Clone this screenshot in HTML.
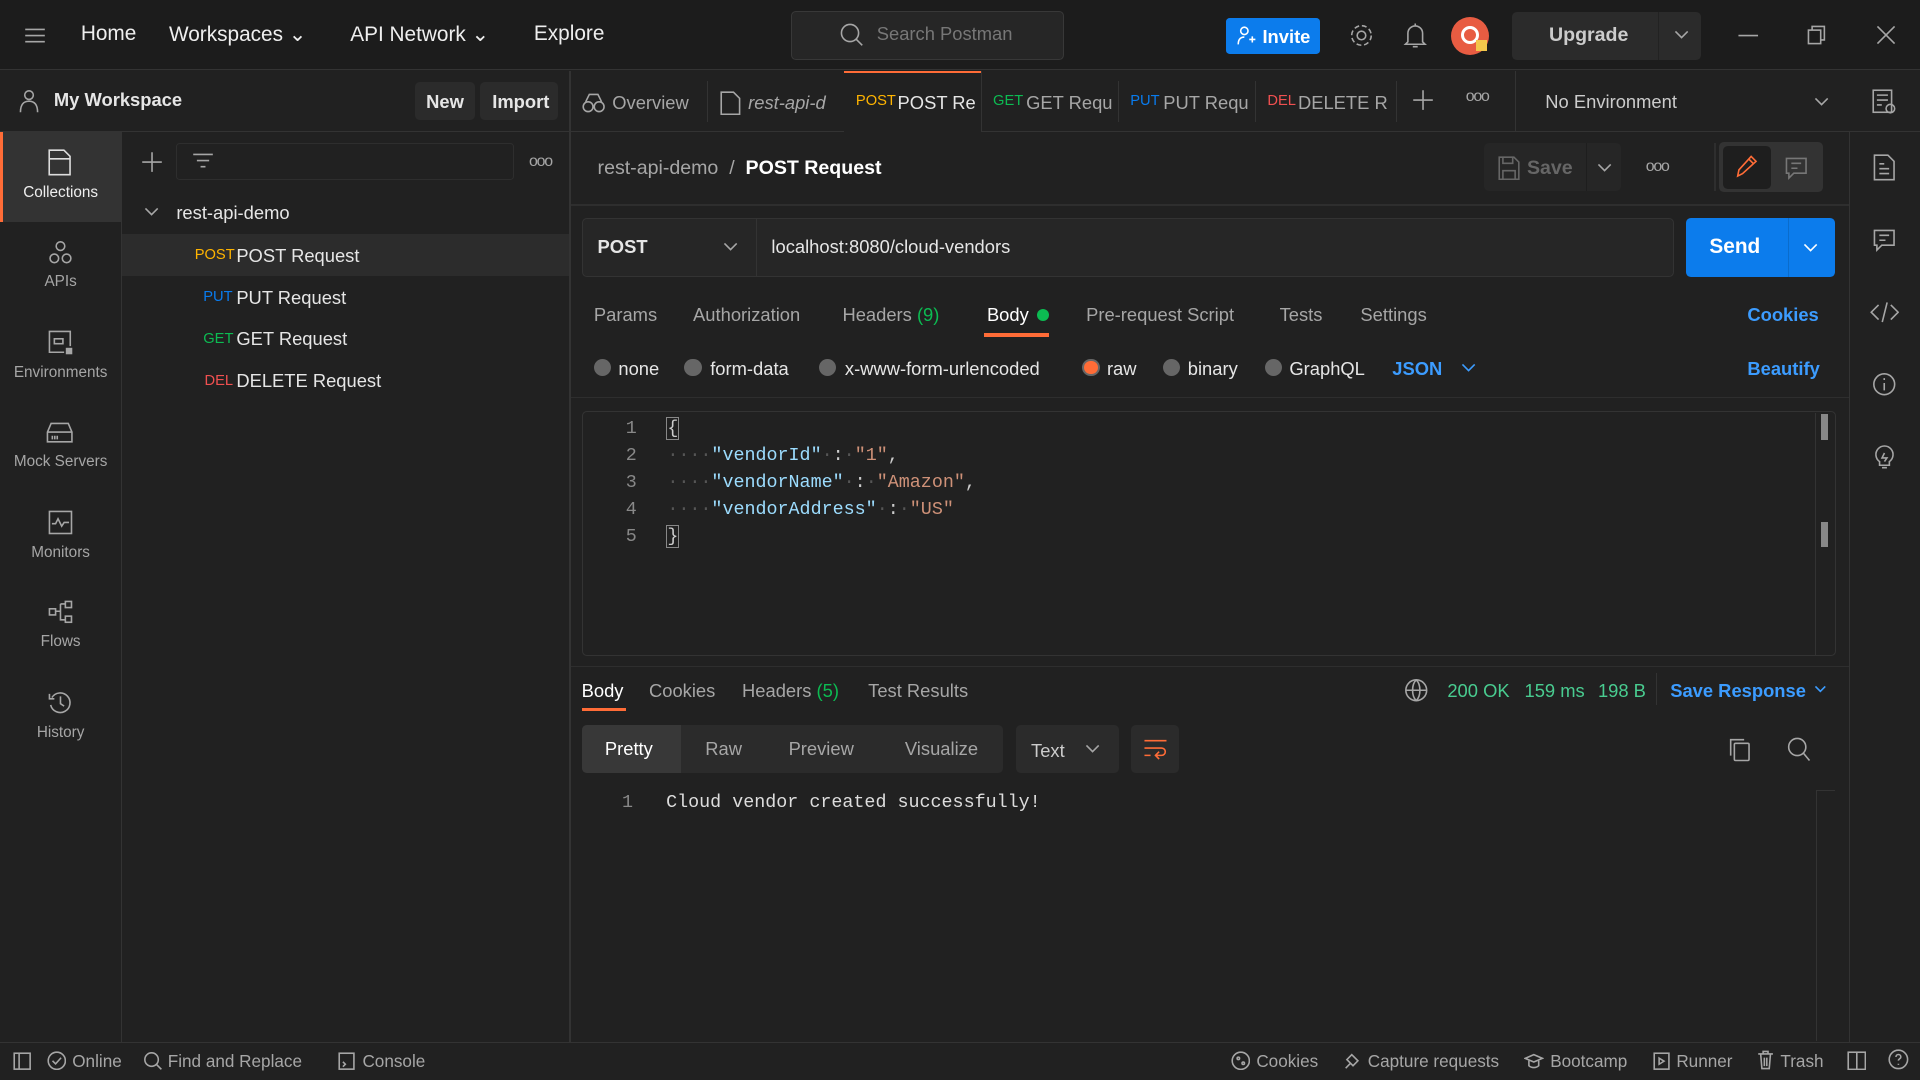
<!DOCTYPE html>
<html><head><meta charset="utf-8">
<style>
html{zoom:1.22449}
*{box-sizing:border-box;margin:0;padding:0}
body{width:1568px;height:882px;background:#212121;color:#e6e6e6;font-family:"Liberation Sans",sans-serif;font-size:14px;position:relative;overflow:hidden}
.a{position:absolute}
.muted{color:#a6a6a6}
svg{position:absolute;fill:none;stroke:#a6a6a6;stroke-width:1.3}
.mono{font-family:"Liberation Mono",monospace}
</style></head><body>
<!-- top bar -->
<div class="a" style="left:0;top:0;width:1568px;height:57px;background:#1c1c1c;border-bottom:1px solid #333"></div>
<svg style="left:20px;top:22px" width="18" height="14"><path d="M1 2h16M1 7h16M1 12h16"/></svg>
<div class="a" style="left:66px;top:18px;font-size:17px;color:#eee">Home</div>
<div class="a" style="left:138px;top:18px;font-size:17px;color:#eee">Workspaces ⌄</div>
<div class="a" style="left:286px;top:18px;font-size:17px;color:#eee">API Network ⌄</div>
<div class="a" style="left:436px;top:18px;font-size:17px;color:#eee">Explore</div>
<div class="a" style="left:646px;top:9px;width:223px;height:40px;background:#262626;border:1px solid #383838;border-radius:4px"></div>
<svg style="left:685px;top:18px" width="22" height="22"><circle cx="9" cy="9" r="7"/><path d="M14 14l5 5"/></svg>
<div class="a" style="left:716px;top:19px;font-size:15px;color:#777">Search Postman</div>
<div class="a" style="left:1001px;top:15px;width:77px;height:29px;background:#0c7cec;border-radius:3px;color:#fff;font-weight:bold;font-size:15px;padding:6px 0 0 30px">Invite</div>
<svg style="left:1010px;top:21px;stroke:#fff" width="16" height="16"><circle cx="6" cy="4" r="3"/><path d="M1 15c0-5 3-6 5-6M10 11h5M12.5 8.5v5"/></svg>
<svg style="left:1101px;top:18px" width="22" height="22"><circle cx="11" cy="11" r="3.5"/><circle cx="11" cy="11" r="8" stroke-dasharray="4 2.3"/></svg>
<svg style="left:1146px;top:17px" width="20" height="24"><path d="M4 17V10a6 6 0 0112 0v7l2 2H2zM8 21h4M10 2v2"/></svg>
<div class="a" style="left:1185px;top:14px;width:31px;height:31px;border-radius:50%;background:#e85c42"></div>
<div class="a" style="left:1193px;top:21px;width:15px;height:15px;border-radius:50%;border:3px solid #fff"></div>
<div class="a" style="left:1205px;top:33px;width:9px;height:9px;background:#f3c64b"></div>
<div class="a" style="left:1235px;top:10px;width:154px;height:39px;background:#2b2b2b;border-radius:4px"></div>
<div class="a" style="left:1265px;top:20px;font-size:16px;font-weight:bold;color:#ccc">Upgrade</div>
<div class="a" style="left:1354px;top:10px;width:1px;height:39px;background:#222"></div>
<svg style="left:1366px;top:24px" width="14" height="10"><path d="M2 2l5 5 5-5"/></svg>
<svg style="left:1418px;top:22px" width="20" height="14"><path d="M2 7h16"/></svg>
<svg style="left:1475px;top:20px" width="18" height="18"><rect x="2" y="5" width="10" height="11"/><path d="M5 5V2h10v11h-3"/></svg>
<svg style="left:1531px;top:20px" width="18" height="18"><path d="M2 2l14 14M16 2L2 16"/></svg>

<!-- second row -->
<div class="a" style="left:0;top:58px;width:1568px;height:50px;border-bottom:1px solid #333"></div>
<svg style="left:15px;top:73px" width="18" height="20"><circle cx="9" cy="5" r="3.5"/><path d="M2 19c0-7 3-9 7-9s7 2 7 9"/></svg>
<div class="a" style="left:44px;top:73px;font-size:15px;font-weight:bold">My Workspace</div>
<div class="a" style="left:339px;top:67px;width:49px;height:31px;background:#2b2b2b;border-radius:4px;font-weight:bold;font-size:15px;padding:7px 0 0 9px">New</div>
<div class="a" style="left:392px;top:67px;width:64px;height:31px;background:#2b2b2b;border-radius:4px;font-weight:bold;font-size:15px;padding:7px 0 0 10px">Import</div>
<div class="a" style="left:465px;top:58px;width:1px;height:793px;background:#333"></div>
<svg style="left:475px;top:75px" width="20" height="18"><circle cx="5" cy="12" r="4"/><circle cx="14" cy="12" r="4"/><path d="M3 8l3-6h7l3 6"/></svg>
<div class="a muted" style="left:500px;top:75px;font-size:15px">Overview</div>
<div class="a" style="left:577px;top:66px;width:1px;height:34px;background:#333"></div>
<svg style="left:588px;top:74px" width="18" height="20"><path d="M1 1h10l5 5v13H1z"/></svg>
<div class="a muted" style="left:611px;top:75px;font-size:15px;font-style:italic">rest-api-d</div>
<div class="a" style="left:689px;top:58px;width:112px;height:50px;background:#212121;border-top:2px solid #ff6c37"></div>
<div class="a" style="left:699px;top:76px;font-size:12px;color:#ffb400">POST</div>
<div class="a" style="left:733px;top:75px;font-size:15px">POST Re</div>
<div class="a" style="left:801px;top:58px;width:1px;height:50px;background:#333"></div>
<div class="a" style="left:811px;top:76px;font-size:12px;color:#0cbb52">GET</div>
<div class="a muted" style="left:838px;top:75px;font-size:15px">GET Requ</div>
<div class="a" style="left:913px;top:66px;width:1px;height:34px;background:#333"></div>
<div class="a" style="left:923px;top:76px;font-size:12px;color:#097bed">PUT</div>
<div class="a muted" style="left:950px;top:75px;font-size:15px">PUT Requ</div>
<div class="a" style="left:1025px;top:66px;width:1px;height:34px;background:#333"></div>
<div class="a" style="left:1035px;top:76px;font-size:12px;color:#f05050">DEL</div>
<div class="a muted" style="left:1060px;top:75px;font-size:15px">DELETE R</div>
<div class="a" style="left:1140px;top:66px;width:1px;height:34px;background:#333"></div>
<svg style="left:1153px;top:73px" width="18" height="18"><path d="M9 1v16M1 9h16"/></svg>
<div class="a muted" style="left:1197px;top:72px;font-size:13px;letter-spacing:-1px">ooo</div>
<div class="a" style="left:1237px;top:58px;width:1px;height:50px;background:#333"></div>
<div class="a" style="left:1262px;top:74px;font-size:15px;color:#ccc">No Environment</div>
<svg style="left:1481px;top:78px" width="14" height="10"><path d="M2 2l5 5 5-5"/></svg>
<div class="a" style="left:1510px;top:108px;width:1px;height:743px;background:#333"></div>
<svg style="left:1529px;top:73px" width="20" height="22"><rect x="1" y="1" width="15" height="18"/><path d="M4 5h9M4 9h9M4 13h4"/><circle cx="15" cy="16" r="3.5"/></svg>

<!-- left rail -->
<div class="a" style="left:99px;top:108px;width:1px;height:743px;background:#333"></div>
<div class="a" style="left:0;top:108px;width:99px;height:73px;background:#333;border-left:3px solid #ff6c37"></div>
<svg style="left:39px;top:122px;stroke:#ddd" width="20" height="22"><path d="M1 1h12l5 5v15H1zM1 8h17"/></svg>
<div class="a" style="left:0;top:150px;width:99px;text-align:center;font-size:12.5px;color:#eee">Collections</div>
<svg style="left:38px;top:196px" width="22" height="22"><circle cx="11" cy="5" r="3.5"/><circle cx="6" cy="15" r="3.5"/><circle cx="16" cy="15" r="3.5"/></svg>
<div class="a muted" style="left:0;top:223px;width:99px;text-align:center;font-size:12.5px">APIs</div>
<svg style="left:38px;top:269px" width="22" height="22"><path d="M14 19H2V2h17v12"/><rect x="6" y="8" width="7" height="4"/><rect x="16" y="16" width="4" height="4" fill="#a6a6a6"/></svg>
<div class="a muted" style="left:0;top:297px;width:99px;text-align:center;font-size:12.5px">Environments</div>
<svg style="left:37px;top:344px" width="24" height="20"><path d="M2 9l3-7h14l3 7v8H2zM2 9h20M6 12v3M8 12v3M10 12v3"/></svg>
<div class="a muted" style="left:0;top:370px;width:99px;text-align:center;font-size:12.5px">Mock Servers</div>
<svg style="left:38px;top:416px" width="22" height="22"><rect x="2" y="2" width="18" height="18"/><path d="M4 12h3l2-4 3 6 2-3h4"/></svg>
<div class="a muted" style="left:0;top:444px;width:99px;text-align:center;font-size:12.5px">Monitors</div>
<svg style="left:38px;top:489px" width="24" height="22"><rect x="2" y="8" width="5" height="5"/><rect x="15" y="2" width="5" height="5"/><rect x="15" y="14" width="5" height="5"/><path d="M7 10h4M11 4v13h4M11 4h4"/></svg>
<div class="a muted" style="left:0;top:517px;width:99px;text-align:center;font-size:12.5px">Flows</div>
<svg style="left:38px;top:563px" width="22" height="22"><path d="M4 7a8 8 0 11-1 6M2 4v4h4M11 6v6l3 2"/></svg>
<div class="a muted" style="left:0;top:591px;width:99px;text-align:center;font-size:12.5px">History</div>

<!-- collections panel -->
<svg style="left:115px;top:123px" width="18" height="18"><path d="M9 1v16M1 9h16"/></svg>
<div class="a" style="left:144px;top:117px;width:276px;height:30px;border:1px solid #2e2e2e;border-radius:3px"></div>
<svg style="left:157px;top:124px" width="18" height="16"><path d="M1 2h16M4 7h10M7 12h4"/></svg>
<div class="a muted" style="left:432px;top:125px;font-size:13px;letter-spacing:-1px">ooo</div>
<svg style="left:117px;top:168px" width="14" height="10"><path d="M2 2l5 5 5-5"/></svg>
<div class="a" style="left:144px;top:165px;font-size:15px">rest-api-demo</div>
<div class="a" style="left:100px;top:191px;width:365px;height:34px;background:#2c2c2c"></div>
<div class="a" style="left:159px;top:202px;font-size:12px;color:#ffb400">POST</div>
<div class="a" style="left:193px;top:200px;font-size:15px">POST Request</div>
<div class="a" style="left:166px;top:236px;font-size:12px;color:#097bed">PUT</div>
<div class="a" style="left:193px;top:234px;font-size:15px">PUT Request</div>
<div class="a" style="left:166px;top:270px;font-size:12px;color:#0cbb52">GET</div>
<div class="a" style="left:193px;top:268px;font-size:15px">GET Request</div>
<div class="a" style="left:167px;top:305px;font-size:12px;color:#f05050">DEL</div>
<div class="a" style="left:193px;top:302px;font-size:15px">DELETE Request</div>

<!-- main -->
<div class="a muted" style="left:488px;top:128px;font-size:16px">rest-api-demo &nbsp;/&nbsp; <span style="color:#fff;font-weight:bold">POST Request</span></div>
<div class="a" style="left:1212px;top:117px;width:112px;height:39px;background:#262626;border-radius:4px"></div>
<div class="a" style="left:1295px;top:117px;width:1px;height:39px;background:#1e1e1e"></div>
<svg style="left:1223px;top:127px;stroke:#666" width="18" height="20"><path d="M1 1h12l4 4v14H1zM4 1v5h8V1M4 19v-7h10v7"/></svg>
<div class="a" style="left:1247px;top:128px;font-size:16px;color:#666;font-weight:bold">Save</div>
<svg style="left:1303px;top:132px" width="14" height="10"><path d="M2 2l5 5 5-5"/></svg>
<div class="a muted" style="left:1344px;top:129px;font-size:13px;letter-spacing:-1px">ooo</div>
<div class="a" style="left:1400px;top:117px;width:1px;height:39px;background:#2e2e2e"></div>
<div class="a" style="left:1404px;top:116px;width:85px;height:41px;background:#333;border-radius:4px"></div>
<div class="a" style="left:1407px;top:119px;width:39px;height:35px;background:#1e1e1e;border-radius:4px"></div>
<svg style="left:1416px;top:126px;stroke:#ff6c37" width="20" height="20"><path d="M3 18l1-5L14 2l4 4L7 16zM12 4l4 4"/></svg>
<svg style="left:1457px;top:127px;stroke:#777" width="20" height="20"><path d="M2 2h16v12H8l-4 4v-4H2zM6 6h8M6 10h5"/></svg>
<div class="a" style="left:466px;top:167px;width:1044px;height:1px;background:#2e2e2e"></div>
<svg style="left:1529px;top:126px" width="20" height="22"><path d="M2 1h11l5 5v15H2zM6 8h4M6 12h8M6 16h8"/></svg>
<svg style="left:1529px;top:186px" width="20" height="20"><path d="M2 2h16v12H8l-4 4v-4H2zM6 6h8M6 10h5"/></svg>
<svg style="left:1527px;top:245px" width="24" height="20"><path d="M7 4l-6 6 6 6M17 4l6 6-6 6M14 2l-4 16"/></svg>
<svg style="left:1529px;top:304px" width="20" height="20"><circle cx="10" cy="10" r="8.5"/><path d="M10 9v6M10 5v1.5"/></svg>
<svg style="left:1528px;top:361px" width="22" height="22"><path d="M7 16a7 7 0 118 0v3H7zM9 21h4M11 9l-2 4h4l-2 3"/></svg>

<!-- url row -->
<div class="a" style="left:475px;top:178px;width:892px;height:48px;background:#262626;border:1px solid #333;border-radius:4px"></div>
<div class="a" style="left:617px;top:178px;width:1px;height:48px;background:#333"></div>
<div class="a" style="left:488px;top:193px;font-size:15px;font-weight:bold">POST</div>
<svg style="left:590px;top:197px" width="14" height="10"><path d="M2 2l5 5 5-5"/></svg>
<div class="a" style="left:630px;top:193px;font-size:15px">localhost:8080/cloud-vendors</div>
<div class="a" style="left:1377px;top:178px;width:122px;height:48px;background:#0c7cec;border-radius:4px"></div>
<div class="a" style="left:1460px;top:178px;width:1px;height:48px;background:#0a6ccc"></div>
<div class="a" style="left:1396px;top:192px;font-size:17px;font-weight:bold;color:#fff">Send</div>
<svg style="left:1472px;top:198px;stroke:#fff" width="14" height="10"><path d="M2 2l5 5 5-5"/></svg>

<!-- request tabs -->
<div class="a muted" style="left:485px;top:248px;font-size:15px">Params</div>
<div class="a muted" style="left:566px;top:248px;font-size:15px">Authorization</div>
<div class="a muted" style="left:688px;top:248px;font-size:15px">Headers <span style="color:#0cbb52">(9)</span></div>
<div class="a" style="left:806px;top:248px;font-size:15px;color:#fff">Body</div>
<div class="a" style="left:847px;top:252px;width:10px;height:10px;border-radius:50%;background:#0cbb52"></div>
<div class="a" style="left:804px;top:272px;width:53px;height:3px;background:#ff6c37"></div>
<div class="a muted" style="left:887px;top:248px;font-size:15px">Pre-request Script</div>
<div class="a muted" style="left:1045px;top:248px;font-size:15px">Tests</div>
<div class="a muted" style="left:1111px;top:248px;font-size:15px">Settings</div>
<div class="a" style="left:1427px;top:248px;font-size:15px;color:#3c9cff;font-weight:bold">Cookies</div>
<!-- radios -->
<div class="a" style="left:485px;top:293px;width:14px;height:14px;border-radius:50%;background:#666"></div>
<div class="a" style="left:505px;top:292px;font-size:15px">none</div>
<div class="a" style="left:559px;top:293px;width:14px;height:14px;border-radius:50%;background:#666"></div>
<div class="a" style="left:580px;top:292px;font-size:15px">form-data</div>
<div class="a" style="left:669px;top:293px;width:14px;height:14px;border-radius:50%;background:#666"></div>
<div class="a" style="left:690px;top:292px;font-size:15px">x-www-form-urlencoded</div>
<div class="a" style="left:884px;top:293px;width:14px;height:14px;border-radius:50%;background:#ff6c37;border:2px solid #666"></div>
<div class="a" style="left:904px;top:292px;font-size:15px">raw</div>
<div class="a" style="left:950px;top:293px;width:14px;height:14px;border-radius:50%;background:#666"></div>
<div class="a" style="left:970px;top:292px;font-size:15px">binary</div>
<div class="a" style="left:1033px;top:293px;width:14px;height:14px;border-radius:50%;background:#666"></div>
<div class="a" style="left:1053px;top:292px;font-size:15px">GraphQL</div>
<div class="a" style="left:1137px;top:292px;font-size:15px;color:#3c9cff;font-weight:bold">JSON</div>
<svg style="left:1192px;top:296px;stroke:#3c9cff" width="14" height="10"><path d="M2 2l5 5 5-5"/></svg>
<div class="a" style="left:1427px;top:292px;font-size:15px;color:#3c9cff;font-weight:bold">Beautify</div>
<div class="a" style="left:466px;top:324px;width:1044px;height:1px;background:#2e2e2e"></div>
<!-- editor -->
<div class="a" style="left:475px;top:336px;width:1024px;height:200px;border:1px solid #333;border-radius:4px"></div>
<div class="a" style="left:1482px;top:337px;width:1px;height:198px;background:#333"></div>
<div class="a" style="left:1487px;top:338px;width:6px;height:21px;background:#888"></div>
<div class="a" style="left:1487px;top:426px;width:6px;height:21px;background:#888"></div>
<div class="a mono" style="left:500px;top:340px;font-size:15px;line-height:22px;color:#888;text-align:right;width:20px">1<br>2<br>3<br>4<br>5</div>
<div class="a mono" style="left:545px;top:340px;font-size:15px;line-height:22px;color:#ccc;white-space:pre"><span style="outline:1px solid #888">{</span>
<span style="color:#555">····</span><span style="color:#9cdcfe">"vendorId"</span><span style="color:#555">·</span>:<span style="color:#555">·</span><span style="color:#ce9178">"1"</span>,
<span style="color:#555">····</span><span style="color:#9cdcfe">"vendorName"</span><span style="color:#555">·</span>:<span style="color:#555">·</span><span style="color:#ce9178">"Amazon"</span>,
<span style="color:#555">····</span><span style="color:#9cdcfe">"vendorAddress"</span><span style="color:#555">·</span>:<span style="color:#555">·</span><span style="color:#ce9178">"US"</span>
<span style="outline:1px solid #888">}</span></div>
<div class="a" style="left:466px;top:544px;width:1044px;height:1px;background:#2e2e2e"></div>

<!-- response -->
<div class="a" style="left:475px;top:555px;font-size:15px;color:#fff">Body</div>
<div class="a" style="left:475px;top:578px;width:36px;height:3px;background:#ff6c37"></div>
<div class="a muted" style="left:530px;top:555px;font-size:15px">Cookies</div>
<div class="a muted" style="left:606px;top:555px;font-size:15px">Headers <span style="color:#0cbb52">(5)</span></div>
<div class="a muted" style="left:709px;top:555px;font-size:15px">Test Results</div>
<svg style="left:1147px;top:554px" width="20" height="20"><circle cx="10" cy="10" r="8.5"/><path d="M1.5 10h17M10 1.5c-4 4-4 13 0 17M10 1.5c4 4 4 13 0 17"/></svg>
<div class="a" style="left:1182px;top:555px;font-size:15px;color:#49cc90">200 OK</div>
<div class="a" style="left:1245px;top:555px;font-size:15px;color:#49cc90">159 ms</div>
<div class="a" style="left:1305px;top:555px;font-size:15px;color:#49cc90">198 B</div>
<div class="a" style="left:1352px;top:550px;width:1px;height:26px;background:#333"></div>
<div class="a" style="left:1364px;top:555px;font-size:15px;color:#3c9cff;font-weight:bold">Save Response</div>
<svg style="left:1481px;top:559px;stroke:#3c9cff" width="12" height="10"><path d="M2 2l4 4 4-4"/></svg>
<div class="a" style="left:475px;top:592px;width:344px;height:39px;background:#2b2b2b;border-radius:4px"></div>
<div class="a" style="left:475px;top:592px;width:81px;height:39px;background:#383838;border-radius:4px 0 0 4px"></div>
<div class="a" style="left:494px;top:603px;font-size:15px;color:#fff">Pretty</div>
<div class="a muted" style="left:576px;top:603px;font-size:15px">Raw</div>
<div class="a muted" style="left:644px;top:603px;font-size:15px">Preview</div>
<div class="a muted" style="left:739px;top:603px;font-size:15px">Visualize</div>
<div class="a" style="left:830px;top:592px;width:84px;height:39px;background:#2b2b2b;border-radius:4px"></div>
<div class="a" style="left:842px;top:604px;font-size:15px;color:#ccc">Text</div>
<svg style="left:885px;top:607px" width="14" height="10"><path d="M2 2l5 5 5-5"/></svg>
<div class="a" style="left:924px;top:592px;width:39px;height:39px;background:#2b2b2b;border-radius:4px"></div>
<svg style="left:933px;top:602px;stroke:#ff6c37" width="22" height="20"><path d="M2 3h18M2 9h14a3 3 0 010 6h-4M14 12l-3 3 3 3M2 15h5"/></svg>
<svg style="left:1410px;top:601px" width="22" height="22"><rect x="6" y="6" width="12" height="14" rx="1"/><path d="M3 16V3h11"/></svg>
<svg style="left:1458px;top:601px" width="22" height="22"><circle cx="10" cy="9" r="7"/><path d="M15 14l5 6"/></svg>
<div class="a mono" style="left:508px;top:647px;font-size:15px;color:#888">1</div>
<div class="a mono" style="left:544px;top:647px;font-size:15px;color:#ddd">Cloud vendor created successfully!</div>
<div class="a" style="left:1483px;top:645px;width:16px;height:205px;border-left:1px solid #333;border-top:1px solid #333"></div>

<!-- status bar -->
<div class="a" style="left:0;top:851px;width:1568px;height:31px;background:#212121;border-top:1px solid #333"></div>
<svg style="left:11px;top:859px" width="16" height="16"><rect x="1" y="1" width="13" height="13"/><path d="M5 1v13"/></svg>
<svg style="left:38px;top:858px" width="16" height="16"><circle cx="8" cy="8" r="7"/><path d="M4.5 8l2.5 2.5 4.5-5"/></svg>
<div class="a muted" style="left:59px;top:858px;font-size:14px">Online</div>
<svg style="left:117px;top:858px" width="16" height="16"><circle cx="7" cy="7" r="5.5"/><path d="M11 11l4 4"/></svg>
<div class="a muted" style="left:137px;top:858px;font-size:14px">Find and Replace</div>
<svg style="left:276px;top:859px" width="14" height="16"><rect x="1" y="1" width="12" height="13"/><path d="M4 8l2 2-2 2"/></svg>
<div class="a muted" style="left:296px;top:858px;font-size:14px">Console</div>
<svg style="left:1005px;top:858px" width="16" height="16"><circle cx="8" cy="8" r="7"/><circle cx="6" cy="6" r="1"/><circle cx="10" cy="10" r="1"/></svg>
<div class="a muted" style="left:1026px;top:858px;font-size:14px">Cookies</div>
<svg style="left:1096px;top:858px" width="16" height="16"><path d="M3 14l4-4M8 3l5 5-4 4-5-5z"/></svg>
<div class="a muted" style="left:1117px;top:858px;font-size:14px">Capture requests</div>
<svg style="left:1245px;top:858px" width="16" height="16"><path d="M1 6l7-3 7 3-7 3zM4 8v4c2 2 6 2 8 0V8"/></svg>
<div class="a muted" style="left:1266px;top:858px;font-size:14px">Bootcamp</div>
<svg style="left:1350px;top:859px" width="14" height="15"><rect x="1" y="1" width="12" height="13"/><path d="M5 5l4 2.5-4 2.5z"/></svg>
<div class="a muted" style="left:1369px;top:858px;font-size:14px">Runner</div>
<svg style="left:1435px;top:857px" width="14" height="17"><path d="M1 4h12M5 4V2h4v2M3 4l1 12h6l1-12M6 7v7M8 7v7"/></svg>
<div class="a muted" style="left:1454px;top:858px;font-size:14px">Trash</div>
<svg style="left:1508px;top:858px" width="16" height="16"><rect x="1" y="1" width="14" height="14"/><path d="M8 1v14"/></svg>
<svg style="left:1542px;top:857px" width="17" height="17"><circle cx="8.5" cy="8.5" r="7.5"/><path d="M6.5 6.5a2 2 0 114 0c0 1.5-2 1.5-2 3M8.5 12v1"/></svg>
</body></html>
